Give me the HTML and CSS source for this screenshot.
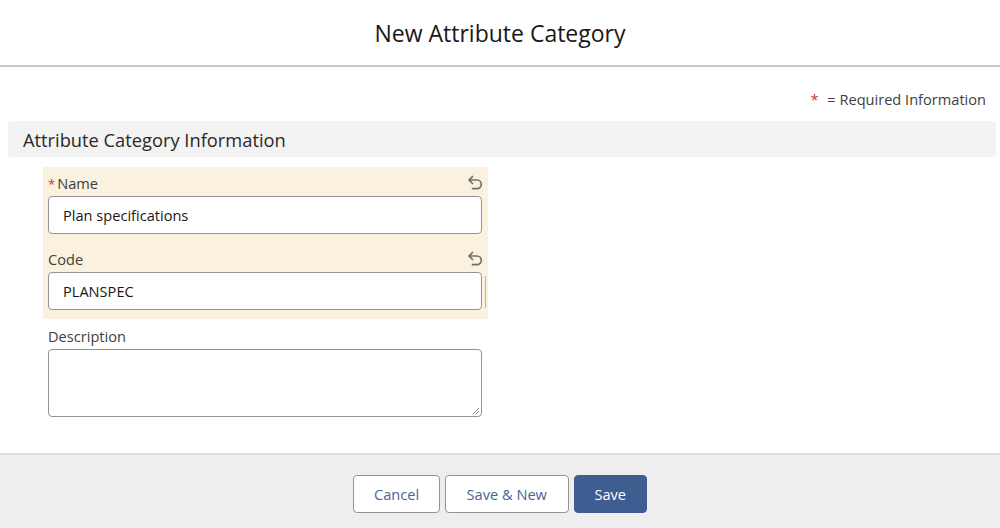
FILE: index.html
```html
<!DOCTYPE html>
<html>
<head>
<meta charset="utf-8">
<link rel="stylesheet" href="styles.css">
</head>
<body>
<div class="header">New Attribute Category</div>
<div class="content">
  <div class="required"><span class="star">*</span> = Required Information</div>
  <div class="section">Attribute Category Information</div>
  <div class="fields">
    <div class="changed">
      <div class="field">
        <div class="label-row">
          <label><span class="star">*</span>Name</label>
          <svg class="undo" width="18" height="18" viewBox="0 0 18 18"><path d="M6.5 2.5 L3 6 L6.5 9.5 M3.5 6 H11 A4.3 4.3 0 0 1 11 14.6 H6.5" fill="none" stroke="#706e6b" stroke-width="1.7" stroke-linecap="round" stroke-linejoin="round"/></svg>
        </div>
        <div class="input">Plan specifications</div>
      </div>
      <div class="field">
        <div class="label-row">
          <label>Code</label>
          <svg class="undo" width="18" height="18" viewBox="0 0 18 18"><path d="M6.5 2.5 L3 6 L6.5 9.5 M3.5 6 H11 A4.3 4.3 0 0 1 11 14.6 H6.5" fill="none" stroke="#706e6b" stroke-width="1.7" stroke-linecap="round" stroke-linejoin="round"/></svg>
        </div>
        <div class="input-wrap"><div class="input">PLANSPEC</div><span class="caret"></span></div>
      </div>
    </div>
    <div class="field plain">
      <div class="label-row"><label>Description</label></div>
      <div class="textarea"><svg class="grip" width="9" height="9" viewBox="0 0 9 9"><path d="M8 2 L2 8 M8 5 L5 8" stroke="#8a8a8a" stroke-width="1"/></svg></div>
    </div>
  </div>
</div>
<div class="footer">
  <button class="btn">Cancel</button>
  <button class="btn wide">Save &amp; New</button>
  <button class="btn primary">Save</button>
</div>
</body>
</html>
```
FILE: styles.css
```css
html, body {
  margin: 0;
  padding: 0;
  background: #ffffff;
  font-family: "Open Sans", "Noto Sans", sans-serif;
  color: #3e3e3c;
}
.header {
  height: 65px;
  display: flex;
  align-items: center;
  justify-content: center;
  font-size: 23px;
  color: #181818;
  border-bottom: 2px solid #c9c9c9;
}
.content {
  padding: 22px 4px 0 8px;
  height: 386px;
  box-sizing: border-box;
}
.required {
  text-align: right;
  padding-right: 10px;
  font-size: 14.6px;
  line-height: 20px;
  color: #3e3e3c;
}
.star {
  color: #c23934;
  margin-right: 5px;
}
.section {
  margin-top: 12px;
  height: 36px;
  background: #f3f3f3;
  border-radius: 4px;
  padding-left: 15px;
  display: flex;
  align-items: center;
  font-size: 18.3px;
  color: #2b2826;
}
.fields {
  margin-left: 35px;
  width: 445px;
  margin-top: 10px;
}
.changed {
  background: #fbf1df;
  padding: 6px 0 9px 0;
}
.field {
  padding: 0 6px 0 5px;
}
.field + .field {
  margin-top: 15px;
}
.plain {
  margin-top: 7px;
}
.label-row {
  display: flex;
  justify-content: space-between;
  align-items: center;
  height: 20px;
  margin-bottom: 3px;
  font-size: 14.6px;
}
.label-row .star {
  font-size: 13px;
  margin-right: 2px;
}
.undo {
  margin-right: -2px;
}
.input-wrap {
  position: relative;
}
.caret {
  position: absolute;
  right: -4px;
  top: 4px;
  width: 1px;
  height: 32px;
  background: #b0b6bf;
}
.input {
  height: 36px;
  border: 1px solid #949494;
  border-radius: 4px;
  background: #fff;
  padding-left: 14px;
  display: flex;
  align-items: center;
  font-size: 14.6px;
  color: #181818;
}
.textarea {
  position: relative;
  height: 66px;
  border: 1px solid #949494;
  border-radius: 4px;
  background: #fff;
}
.grip {
  position: absolute;
  right: 1px;
  bottom: 1px;
}
.footer {
  height: 75px;
  border-top: 2px solid #dddddd;
  background: #eeeeee;
  display: flex;
  justify-content: center;
  align-items: flex-start;
  padding-top: 20px;
  box-sizing: border-box;
  gap: 5px;
}
.btn {
  font-family: inherit;
  height: 38px;
  padding: 0 19.5px;
  border: 1px solid #949494;
  border-radius: 4px;
  background: #fff;
  color: #4a6496;
  font-size: 14.6px;
}
.btn.wide {
  padding: 0 21px;
}
.btn.primary {
  background: #3e5d90;
  border-color: #3e5d90;
  color: #fff;
}
```
